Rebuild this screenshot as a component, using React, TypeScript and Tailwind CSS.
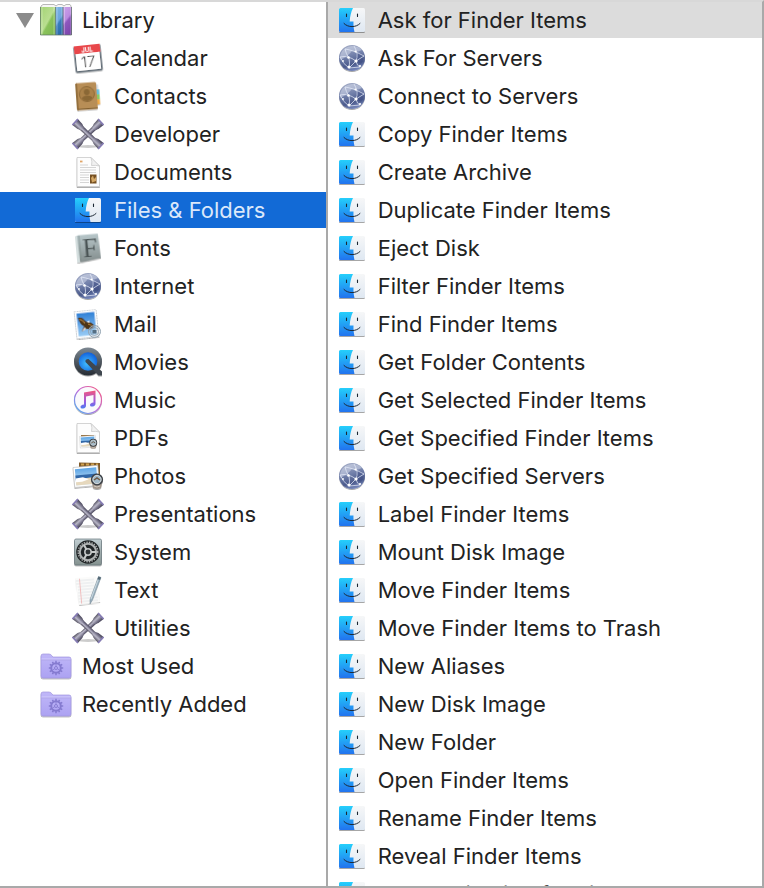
import React, { useState } from "react";

const small = "h-8 w-8 shrink-0";

function Defs() {
  return (
    <svg className="absolute h-0 w-0" aria-hidden="true">
      <defs>
        <linearGradient id="faceBlue" x1="0" y1="0" x2="0" y2="1">
          <stop offset="0" stopColor="#25cffb" />
          <stop offset="1" stopColor="#2173ee" />
        </linearGradient>
        <linearGradient id="faceWhite" x1="0" y1="0" x2="0" y2="1">
          <stop offset="0" stopColor="#f6f7f8" />
          <stop offset="1" stopColor="#dfe8f2" />
        </linearGradient>
        <linearGradient id="globe" x1="0.3" y1="0" x2="0.6" y2="1">
          <stop offset="0" stopColor="#a3acc6" />
          <stop offset="0.4" stopColor="#7482ac" />
          <stop offset="0.75" stopColor="#4c5b8c" />
          <stop offset="1" stopColor="#7b8cc0" />
        </linearGradient>
        <linearGradient id="metal" x1="0" y1="0" x2="1" y2="0">
          <stop offset="0" stopColor="#4b4857" />
          <stop offset="0.4" stopColor="#b9b7c8" />
          <stop offset="0.7" stopColor="#77748a" />
          <stop offset="1" stopColor="#3f3c50" />
        </linearGradient>
        <linearGradient id="green" x1="0" y1="0" x2="1" y2="1">
          <stop offset="0" stopColor="#a3d374" />
          <stop offset="0.5" stopColor="#b9de90" />
          <stop offset="0.58" stopColor="#8ac25b" />
          <stop offset="1" stopColor="#7cb74e" />
        </linearGradient>
        <linearGradient id="blueBook" x1="0" y1="0" x2="0.4" y2="1">
          <stop offset="0" stopColor="#7fb5e6" />
          <stop offset="0.55" stopColor="#6ba5dc" />
          <stop offset="0.65" stopColor="#3a7dbd" />
          <stop offset="1" stopColor="#2d6cab" />
        </linearGradient>
        <linearGradient id="purpleBook" x1="0" y1="0" x2="0.4" y2="1">
          <stop offset="0" stopColor="#cba2ea" />
          <stop offset="0.5" stopColor="#bb8be0" />
          <stop offset="0.6" stopColor="#8e58be" />
          <stop offset="1" stopColor="#7f48ae" />
        </linearGradient>
        <linearGradient id="fontBook" x1="0" y1="0" x2="0" y2="1">
          <stop offset="0" stopColor="#b7c6c9" />
          <stop offset="1" stopColor="#858f8f" />
        </linearGradient>
        <linearGradient id="ringDark" x1="0" y1="0" x2="0" y2="1">
          <stop offset="0" stopColor="#7c8791" />
          <stop offset="1" stopColor="#262c33" />
        </linearGradient>
        <radialGradient id="lens" cx="0.45" cy="0.6" r="0.6">
          <stop offset="0" stopColor="#43c0ff" />
          <stop offset="1" stopColor="#1160db" />
        </radialGradient>
        <linearGradient id="musicRing" x1="1" y1="0" x2="0" y2="1">
          <stop offset="0" stopColor="#fa5c78" />
          <stop offset="0.5" stopColor="#c06bdc" />
          <stop offset="1" stopColor="#3fb6f2" />
        </linearGradient>
        <linearGradient id="note" x1="0" y1="0" x2="0" y2="1">
          <stop offset="0" stopColor="#f2557e" />
          <stop offset="0.6" stopColor="#9d5be0" />
          <stop offset="1" stopColor="#4c7bf0" />
        </linearGradient>
        <linearGradient id="sky" x1="0" y1="0" x2="0" y2="1">
          <stop offset="0" stopColor="#2f80d6" />
          <stop offset="1" stopColor="#9accf5" />
        </linearGradient>
        <linearGradient id="beachSky" x1="0" y1="0" x2="0" y2="1">
          <stop offset="0" stopColor="#5ea6e6" />
          <stop offset="1" stopColor="#d3e9f8" />
        </linearGradient>
        <linearGradient id="panel" x1="0" y1="0" x2="0" y2="1">
          <stop offset="0" stopColor="#c0cdd1" />
          <stop offset="1" stopColor="#84918f" />
        </linearGradient>
        <linearGradient id="folder" x1="0" y1="0" x2="0" y2="1">
          <stop offset="0" stopColor="#c0b7f8" />
          <stop offset="1" stopColor="#aca2f2" />
        </linearGradient>
        <filter id="drop" x="-20%" y="-20%" width="140%" height="150%">
          <feDropShadow dx="0" dy="1" stdDeviation="0.7" floodOpacity="0.35" />
        </filter>
      </defs>
    </svg>
  );
}

function FinderIcon() {
  return (
    <svg viewBox="0 0 32 32" className={small} aria-hidden="true">
      <g filter="url(#drop)">
        <rect x="3" y="4" width="26" height="24" rx="1.5" fill="url(#faceWhite)" />
        <path d="M4.500 4H17C15 8 14 12.500 13.700 17.500H17.500C17.300 21 17.700 25 18.500 28H4.500Q3 28 3 26.500V5.500Q3 4 4.500 4Z" fill="url(#faceBlue)" />
      </g>
      <path d="M10.500 10V12.500M21.500 10V12.500" stroke="#1c2733" strokeWidth="1.1" strokeLinecap="round" />
      <path d="M8 19.500C12 23.700 20 23.700 24 19.500" stroke="#1c2733" strokeWidth="1" strokeLinecap="round" fill="none" />
    </svg>
  );
}

function GlobeIcon() {
  return (
    <svg viewBox="0 0 32 32" className={small} aria-hidden="true">
      <circle cx="16" cy="16" r="13" fill="url(#globe)" filter="url(#drop)" />
      <path d="M4.500 12Q8 4.500 16 4Q23 4 26 8Q21 11 16 9Q11 15 4.500 18Q3.500 15 4.500 12Z" fill="#d8deed" opacity="0.5" />
      <path d="M20 12Q25 10 27 13Q28 18 25 22Q20 20 20 12Z" fill="#33427a" opacity="0.35" />
      <g stroke="#e6ecfa" strokeWidth="0.9" fill="none" opacity="0.8">
        <path d="M4 15Q12 13 20 19M20 19Q23 12 18 4M20 19L28 14M20 19L13 26M20 19Q21 24 24 25M4 15Q7 22 13 26M9 7Q10 12 13 16Q14 21 13 26M9 7Q17 8 28 14M13 26L24 25" />
      </g>
      <g fill="#fff">
        <circle cx="20" cy="19" r="1.6" />
        <circle cx="13" cy="25" r="1.5" />
        <circle cx="12.500" cy="15.500" r="1.3" />
        <circle cx="24" cy="24" r="1.100" />
        <circle cx="19.500" cy="9.500" r="1" />
        <circle cx="7" cy="19" r="0.9" />
      </g>
    </svg>
  );
}

function WrenchIcon() {
  const arm = (
    <>
      <path d="M13.500 4H18.500L18 28H14Z" fill="url(#metal)" />
      <path d="M12 -2H20L19.500 5L18 8.500H14L12.500 5Z" fill="url(#metal)" />
      <path d="M12 34H20L19.500 27L18 23.500H14L12.500 27Z" fill="url(#metal)" />
      <path d="M12 -1.500H20M12 33.500H20" stroke="#857bb4" strokeWidth="1.600" />
    </>
  );
  return (
    <svg viewBox="0 0 32 32" className={small} aria-hidden="true">
      <ellipse cx="16" cy="28.500" rx="10" ry="1.500" fill="#000" opacity="0.2" />
      <g transform="rotate(47 16 16)">{arm}</g>
      <g transform="rotate(-47 16 16)">{arm}</g>
    </svg>
  );
}

function CalendarIcon() {
  return (
    <svg viewBox="0 0 32 32" className={small} aria-hidden="true">
      <g transform="rotate(-6 16 16)" filter="url(#drop)">
        <rect x="2.500" y="3" width="27" height="26.500" rx="1.500" fill="#5f6b75" />
        <rect x="4" y="4" width="24" height="24" rx="0.500" fill="#fff" />
        <path d="M3 3H29V11H3Z" fill="#e8474b" />
        <text x="16" y="9.500" fontSize="6" fontWeight="700" textAnchor="middle" fill="#fff" fontFamily="Inter, sans-serif">JUL</text>
        <text x="16" y="24.500" fontSize="15" fontWeight="300" textAnchor="middle" fill="#333" fontFamily="Inter, sans-serif">17</text>
      </g>
    </svg>
  );
}

function ContactsIcon() {
  return (
    <svg viewBox="0 0 32 32" className={small} aria-hidden="true">
      <g transform="rotate(-4 16 16)" filter="url(#drop)">
        <path d="M24 5H26.500V11H24Z" fill="#d5dde3" />
        <path d="M24 10H27.500V15H24Z" fill="#62c1e0" />
        <path d="M24 15H27.500V20H24Z" fill="#8bc964" />
        <path d="M24 20H27.500V25H24Z" fill="#efab47" />
        <rect x="4" y="2.500" width="21" height="27" rx="1.500" fill="#b88e57" />
        <path d="M4 4V28Q4 29.500 6 29.500V2.500Q4 2.500 4 4Z" fill="#94703d" />
        <circle cx="15" cy="14" r="7.500" fill="#ab8249" stroke="#8a6736" strokeWidth="0.900" />
        <circle cx="15" cy="12" r="2.900" fill="#8a6736" />
        <path d="M9.500 18Q11 15.500 15 15.500T20.500 18Q18 21 15 21T9.500 18Z" fill="#8a6736" />
        <path d="M5 28.500H25" stroke="#83602f" />
      </g>
    </svg>
  );
}

function PageBase({ children }: { children: React.ReactNode }) {
  return (
    <svg viewBox="0 0 32 32" className={small} aria-hidden="true">
      <path d="M5 1.500H19L27.500 10V30.500H5Z" fill="#fdfdfd" stroke="#c9c9c9" strokeWidth="0.800" filter="url(#drop)" />
      <path d="M19 1.500Q20.500 6 19.500 9.500Q24 9 27.500 10Z" fill="#f1f1f1" stroke="#c4c4c4" strokeWidth="0.700" />
      {children}
    </svg>
  );
}

function DocumentIcon() {
  return (
    <PageBase>
      <path d="M8 5.500H10.500" stroke="#e0a566" strokeWidth="1.800" />
      <path d="M8 9H16M8 11.500H24M8 14H24M8 16.500H24M8 19H17M8 21.500H17M8 24H17M8 26.500H17" stroke="#d0d0d0" strokeWidth="0.900" />
      <rect x="18" y="18.500" width="6.500" height="9" fill="#765022" />
      <path d="M19 22L21 19.500L22 23L24 21V25L20 26.500Z" fill="#d3a765" />
    </PageBase>
  );
}

function PhotoArt() {
  return (
    <>
      <path d="M0 0H22V16H0Z" fill="#fff" stroke="#b8b8b8" strokeWidth="0.500" />
      <path d="M1.500 1.500H20.500V14.500H1.500Z" fill="url(#beachSky)" />
      <path d="M1.500 6.500H20.500V10.500H1.500Z" fill="#3168a8" />
      <path d="M1.500 11Q9 8.500 20.500 9.500V14.500H1.500Z" fill="#e6d8bd" />
      <path d="M1.500 9L8 8.500L13 10.500L7 12L1.500 12Z" fill="#fff" />
    </>
  );
}

function Loupe() {
  return (
    <>
      <path d="M19.500 21L21 28Q25 30 29 28L30.500 21Z" fill="#a3978c" />
      <path d="M22 26Q25 28 28 26" stroke="#d3cbc1" fill="none" />
      <circle cx="25" cy="19.500" r="5.200" fill="#4b5c69" stroke="#3a4047" strokeWidth="1.800" />
      <circle cx="25" cy="19.500" r="4.200" fill="#a2b9c8" stroke="#d7dbdc" strokeWidth="1" />
      <path d="M22 20L25 18L28 20" fill="none" stroke="#6e5946" strokeWidth="1.500" />
    </>
  );
}

function PdfIcon() {
  return (
    <PageBase>
      <path d="M9 13H22V22H9Z" fill="#96703e" />
      <g transform="translate(7.500 14.500) rotate(-4) scale(0.720)"><PhotoArt /></g>
      <g transform="translate(5 8) scale(0.650)"><Loupe /></g>
    </PageBase>
  );
}

function PhotosIcon() {
  return (
    <svg viewBox="0 0 32 32" className={small} aria-hidden="true">
      <g filter="url(#drop)">
        <path d="M6 1.500L29 2V19L6 19Z" fill="#fff" />
        <path d="M7 2.500L28 3V18H7Z" fill="#7f5a2a" />
        <path d="M9 4.500H26" stroke="#d0a14f" strokeWidth="2" strokeDasharray="3 2" />
        <g transform="translate(1 7.500) rotate(-5) scale(1.130 1.250)"><PhotoArt /></g>
        <Loupe />
      </g>
    </svg>
  );
}

function FontsIcon() {
  return (
    <svg viewBox="0 0 32 32" className={small} aria-hidden="true">
      <g transform="rotate(-5 16 16)" filter="url(#drop)">
        <path d="M4 4L7 2.500H27L28 27L9 29.500L4 29Z" fill="url(#fontBook)" />
        <path d="M4 4L6 2.500L7 29.500H4Z" fill="#d5dfdf" />
        <path d="M8 3V29" stroke="#83908e" strokeWidth="0.700" />
        <text x="18" y="24.500" fontSize="27" textAnchor="middle" fill="#4b5456" fontFamily="Liberation Serif, serif">F</text>
      </g>
    </svg>
  );
}

function MailIcon() {
  return (
    <svg viewBox="0 0 32 32" className={small} aria-hidden="true">
      <g transform="rotate(-6 16 16)" filter="url(#drop)">
        <rect x="3.500" y="2.500" width="22" height="27" fill="#fff" stroke="#c5cbd0" strokeWidth="1" strokeDasharray="1.500 1" />
        <rect x="5.500" y="4.500" width="18" height="23" fill="url(#sky)" />
        <path d="M6.500 9Q11 8 13 12L15.500 14Q20 14 22.500 19Q20 18.500 20.500 21Q18 20 17.500 22Q15 20 13 21L9 23Q10 20 12 18Q8 16 6.500 9Z" fill="#4d3419" />
        <path d="M8 10.500Q11 11 13 15M16 16Q19 17 20.500 19" stroke="#c08d41" fill="none" />
        <path d="M9 23L12.500 19L13.500 21Z" fill="#f2efe8" />
        <path d="M15 14L17.500 12.500L17.500 15Z" fill="#fff" />
      </g>
      <circle cx="22.500" cy="23.500" r="6" fill="#becbd5" fillOpacity="0.300" stroke="#92a3b1" strokeWidth="1" />
      <circle cx="22.500" cy="23.500" r="4" fill="none" stroke="#8496a5" strokeWidth="0.700" />
      <path d="M20.500 22H24.500V25.500H20.500Z" fill="#566f83" />
    </svg>
  );
}

function MoviesIcon() {
  return (
    <svg viewBox="0 0 32 32" className={small} aria-hidden="true">
      <g filter="url(#drop)">
        <circle cx="16" cy="15.500" r="14" fill="url(#ringDark)" />
        <circle cx="16" cy="15.500" r="9.300" fill="url(#lens)" />
        <path d="M16.500 13L30 25.500V29.500H26.500L13.500 16Q12.800 13 16.500 13Z" fill="#3f4750" />
      </g>
    </svg>
  );
}

function MusicIcon() {
  return (
    <svg viewBox="0 0 32 32" className={small} aria-hidden="true">
      <g filter="url(#drop)">
        <circle cx="16" cy="16" r="13.500" fill="#fafafc" stroke="url(#musicRing)" strokeWidth="1.200" />
      </g>
      <path d="M12 8.500L23.500 6.500V19.500Q23.500 22 20.500 22.500Q18 23 18 21Q18 19 21.500 18.500V11L14 12.500V21.500Q14 24 11 24.500Q8.500 25 8.500 23Q8.500 21 12 20.500Z" fill="url(#note)" />
    </svg>
  );
}

function SystemIcon() {
  const spokes = [90, 210, 330];
  return (
    <svg viewBox="0 0 32 32" className={small} aria-hidden="true">
      <rect x="2.500" y="3" width="27" height="26" rx="1.500" fill="url(#panel)" stroke="#65747a" strokeWidth="0.700" filter="url(#drop)" />
      <circle cx="16" cy="16" r="11.800" fill="#202426" />
      <circle cx="16" cy="16" r="9.800" fill="none" stroke="#b3b6b6" strokeWidth="1.400" strokeDasharray="1.400 1.200" />
      <circle cx="16" cy="16" r="8.200" fill="none" stroke="#aeb1b1" strokeWidth="2" />
      <circle cx="16" cy="16" r="3.200" fill="#303436" stroke="#c4c7c7" strokeWidth="1.500" />
      {spokes.map((angle) => (
        <path key={angle} d="M16 13V8" transform={`rotate(${angle} 16 16)`} stroke="#c6c9c9" strokeWidth="2" />
      ))}
    </svg>
  );
}

function TextIcon() {
  return (
    <svg viewBox="0 0 32 32" className={small} aria-hidden="true">
      <g transform="rotate(-5 16 16)" filter="url(#drop)">
        <path d="M4 3H25L27 29L6 30Z" fill="#fbfbfa" />
        <path d="M5 6H23M5 9H23M6 12H23M6 15H24M6 18H24M6 21H24M6 24H25M6 27H25" stroke="#d8dddf" strokeWidth="0.700" />
        <path d="M8.500 4V29" stroke="#f0adad" strokeWidth="0.800" />
      </g>
      <path d="M26.500 2.500L29 3.500L20.500 26L18 30L18 25.500Z" fill="#9ab0be" stroke="#6f828e" strokeWidth="0.500" />
      <path d="M26.500 2.500L29 3.500L28 6L25.500 5Z" fill="#536875" />
      <path d="M26 6L19 25" stroke="#dfebf1" strokeWidth="0.700" />
    </svg>
  );
}

function LibraryIcon() {
  return (
    <svg viewBox="0 0 32 32" className={small} aria-hidden="true">
      <path d="M1 2L3 0.500H14L16 2L18 0.500H22L24 2L26 0.500H30L31 2V5H1Z" fill="#f6f6f6" stroke="#a7a7a7" strokeWidth="0.800" />
      <path d="M0 3H15.500V31H0Z" fill="url(#green)" />
      <path d="M15.500 3H23V31H15.500Z" fill="url(#blueBook)" />
      <path d="M23 3H32V31H23Z" fill="url(#purpleBook)" />
      <path d="M2 3V31M14 3V31M17 3V31M22 3V31M24.500 3V31M31 3V31" stroke="#fff" opacity="0.3" />
      <path d="M0.500 3V31H31.500V3M15.500 3V31M23 3V31" fill="none" stroke="#5a7362" strokeWidth="0.700" />
    </svg>
  );
}

function SmartFolderIcon() {
  const teeth = [0, 30, 60, 90, 120, 150, 180, 210, 240, 270, 300, 330];
  return (
    <svg viewBox="0 0 32 32" className={small} aria-hidden="true">
      <path d="M1 6Q1 4 3 4H9Q11 4 12 6L13 7H29Q31 7 31 9V26Q31 28 29 28H3Q1 28 1 26Z" fill="url(#folder)" stroke="#a297de" strokeWidth="0.700" filter="url(#drop)" />
      <path d="M1.500 9H30.500" stroke="#d3ccfc" />
      <path d="M1.500 10H30.500" stroke="#a79cdf" strokeWidth="0.500" />
      <g stroke="#857bd0" fill="none">
        <circle cx="16" cy="18" r="4.800" strokeWidth="2" />
        <circle cx="16" cy="18" r="1.500" strokeWidth="0.900" />
        {teeth.map((angle) => (
          <path key={angle} d="M16 13V10.800" transform={`rotate(${angle} 16 18)`} strokeWidth="1.500" />
        ))}
        <path d="M16 16.500V14M17.300 18.800L19.500 20M14.700 18.800L12.500 20" strokeWidth="0.800" />
      </g>
    </svg>
  );
}

const categories: { name: string; Icon: () => React.JSX.Element }[] = [
  { name: "Calendar", Icon: CalendarIcon },
  { name: "Contacts", Icon: ContactsIcon },
  { name: "Developer", Icon: WrenchIcon },
  { name: "Documents", Icon: DocumentIcon },
  { name: "Files & Folders", Icon: FinderIcon },
  { name: "Fonts", Icon: FontsIcon },
  { name: "Internet", Icon: GlobeIcon },
  { name: "Mail", Icon: MailIcon },
  { name: "Movies", Icon: MoviesIcon },
  { name: "Music", Icon: MusicIcon },
  { name: "PDFs", Icon: PdfIcon },
  { name: "Photos", Icon: PhotosIcon },
  { name: "Presentations", Icon: WrenchIcon },
  { name: "System", Icon: SystemIcon },
  { name: "Text", Icon: TextIcon },
  { name: "Utilities", Icon: WrenchIcon },
];

const actions = [
  "Ask for Finder Items", "Ask For Servers", "Connect to Servers", "Copy Finder Items",
  "Create Archive", "Duplicate Finder Items", "Eject Disk", "Filter Finder Items",
  "Find Finder Items", "Get Folder Contents", "Get Selected Finder Items",
  "Get Specified Finder Items", "Get Specified Servers", "Label Finder Items",
  "Mount Disk Image", "Move Finder Items", "Move Finder Items to Trash", "New Aliases",
  "New Disk Image", "New Folder", "Open Finder Items", "Rename Finder Items",
  "Reveal Finder Items", "Set Application for Files",
];

const row = "flex h-9 w-full items-center gap-2.5 whitespace-nowrap text-left";

export default function App() {
  const [category, setCategory] = useState("Files & Folders");
  const [action, setAction] = useState("Ask for Finder Items");
  const [open, setOpen] = useState(true);
  const tone = (name: string) => (category === name ? "bg-[#126ad6] text-[#dbe8fa]" : "");

  return (
    <main className="flex h-screen overflow-hidden border-t-2 border-r-2 border-b-2 border-t-[#d8d8d8] border-r-[#a9a9a9] border-b-[#a9a9a9] bg-white font-['Inter','Liberation_Sans',sans-serif] text-[22px] leading-7 text-[#222222]">
      <Defs />
      <nav aria-label="Library" className="w-[43%] shrink-0 overflow-hidden border-r-2 border-[#a9a9a9]">
        <ul className="flex flex-col gap-0.5">
          <li>
            <button type="button" aria-expanded={open} onClick={() => setOpen(!open)} className={`${row} pl-4`}>
              <span className="flex items-center gap-1.5">
                <svg viewBox="0 0 18 15" className="h-[15px] w-[18px]" aria-hidden="true">
                  <path d="M0 0H18L9 15Z" fill="#8b8b8b" />
                </svg>
                <LibraryIcon />
              </span>
              Library
            </button>
          </li>
          {open && categories.map(({ name, Icon }) => (
            <li key={name}>
              <button type="button" aria-pressed={category === name} onClick={() => setCategory(name)} className={`${row} pl-[72px] ${tone(name)}`}>
                <Icon />{name}
              </button>
            </li>
          ))}
          {["Most Used", "Recently Added"].map((name) => (
            <li key={name}>
              <button type="button" aria-pressed={category === name} onClick={() => setCategory(name)} className={`${row} pl-10 ${tone(name)}`}>
                <SmartFolderIcon />{name}
              </button>
            </li>
          ))}
        </ul>
      </nav>
      <section aria-label="Actions" className="min-w-0 flex-1 overflow-hidden">
        <ul className="flex flex-col gap-0.5">
          {actions.map((name) => (
            <li key={name}>
              <button type="button" aria-pressed={action === name} onClick={() => setAction(name)} className={`${row} pl-2 ${action === name ? "bg-[#dcdcdc]" : ""}`}>
                {name.includes("Servers") ? <GlobeIcon /> : <FinderIcon />}{name}
              </button>
            </li>
          ))}
        </ul>
      </section>
    </main>
  );
}
